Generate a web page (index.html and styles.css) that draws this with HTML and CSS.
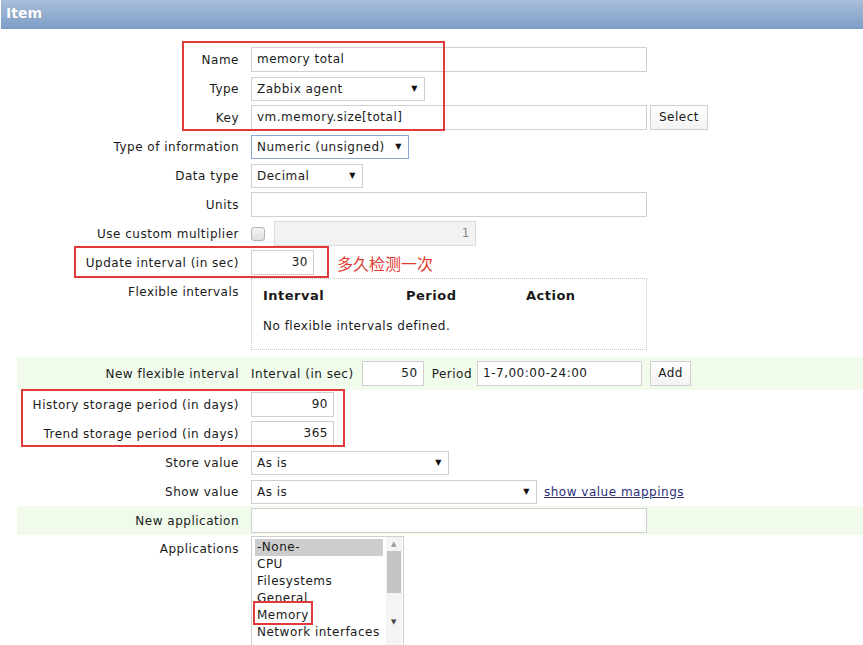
FILE: index.html
```html
<!DOCTYPE html>
<html>
<head>
<meta charset="utf-8">
<link rel="stylesheet" href="styles.css">
</head>
<body>
<div class="page">
  <div class="header">Item</div>
  <div class="form">
    <div class="row">
      <div class="label">Name</div>
      <div class="field">
        <div class="input w396">memory total</div>
      </div>
    </div>
    <div class="row">
      <div class="label">Type</div>
      <div class="field">
        <div class="select w174">Zabbix agent<span class="arrow">▼</span></div>
      </div>
    </div>
    <div class="row">
      <div class="label">Key</div>
      <div class="field">
        <div class="input w396">vm.memory.size[total]</div>
        <div class="button btn-select">Select</div>
      </div>
    </div>
    <div class="row">
      <div class="label">Type of information</div>
      <div class="field">
        <div class="select w158 focused">Numeric (unsigned)<span class="arrow">▼</span></div>
      </div>
    </div>
    <div class="row">
      <div class="label">Data type</div>
      <div class="field">
        <div class="select w112">Decimal<span class="arrow">▼</span></div>
      </div>
    </div>
    <div class="row">
      <div class="label">Units</div>
      <div class="field">
        <div class="input w396"></div>
      </div>
    </div>
    <div class="row">
      <div class="label">Use custom multiplier</div>
      <div class="field">
        <div class="checkbox"></div>
        <div class="input w202 disabled num">1</div>
      </div>
    </div>
    <div class="row">
      <div class="label">Update interval (in sec)</div>
      <div class="field">
        <div class="input w63 num">30</div>
        <span class="note">多久检测一次</span>
      </div>
    </div>
    <div class="row row-flex">
      <div class="label">Flexible intervals</div>
      <div class="field top">
        <div class="flexbox">
          <div class="flex-head">
            <span class="c1">Interval</span>
            <span class="c2">Period</span>
            <span class="c3">Action</span>
          </div>
          <div class="flex-empty">No flexible intervals defined.</div>
        </div>
      </div>
    </div>
    <div class="row green row-new">
      <div class="label">New flexible interval</div>
      <div class="field">
        <span class="inline-label first">Interval (in sec)</span>
        <div class="input w62 num">50</div>
        <span class="inline-label period">Period</span>
        <div class="input w165">1-7,00:00-24:00</div>
        <div class="button btn-add">Add</div>
      </div>
    </div>
    <div class="row">
      <div class="label">History storage period (in days)</div>
      <div class="field">
        <div class="input w83 num">90</div>
      </div>
    </div>
    <div class="row">
      <div class="label">Trend storage period (in days)</div>
      <div class="field">
        <div class="input w83 num">365</div>
      </div>
    </div>
    <div class="row">
      <div class="label">Store value</div>
      <div class="field">
        <div class="select w198">As is<span class="arrow">▼</span></div>
      </div>
    </div>
    <div class="row">
      <div class="label">Show value</div>
      <div class="field">
        <div class="select w286">As is<span class="arrow">▼</span></div>
        <a class="link" href="#">show value mappings</a>
      </div>
    </div>
    <div class="row green">
      <div class="label">New application</div>
      <div class="field">
        <div class="input w396"></div>
      </div>
    </div>
    <div class="row row-apps">
      <div class="label">Applications</div>
      <div class="field top">
        <div class="listbox">
          <div class="options">
            <div class="opt selected">-None-</div>
            <div class="opt">CPU</div>
            <div class="opt">Filesystems</div>
            <div class="opt">General</div>
            <div class="opt">Memory</div>
            <div class="opt">Network interfaces</div>
          </div>
          <div class="scrollbar">
            <span class="sarrow up">▲</span>
            <div class="thumb"></div>
            <span class="sarrow down">▼</span>
          </div>
        </div>
      </div>
    </div>
  </div>
  <div class="mark m1"></div>
  <div class="mark m2"></div>
  <div class="mark m3"></div>
  <div class="mark m4"></div>
</div>
</body>
</html>
```

FILE: styles.css
```css
html, body {
  margin: 0;
  padding: 0;
  background: #ffffff;
  overflow: hidden;
}
body {
  font-family: "DejaVu Sans", Verdana, sans-serif;
  font-size: 12px;
  letter-spacing: 0.5px;
  color: #1a1a1a;
}
.page {
  position: relative;
  width: 863px;
  height: 645px;
  overflow: hidden;
}
.header {
  height: 29px;
  line-height: 27px;
  padding-left: 5px;
  margin-left: 1px;
  background: linear-gradient(#a9bed8, #93aed0 50%, #7d9cc6);
  color: #ffffff;
  font-weight: bold;
  font-size: 14px;
  letter-spacing: 0;
  text-shadow: 0 0 1px #6d86a8;
  box-sizing: border-box;
}
.form {
  margin-left: 17px;
  padding-top: 16px;
}
.row {
  display: flex;
  align-items: center;
  height: 29px;
}
.row.green {
  background: #f0fbec;
}
.row-flex {
  height: 80px;
  align-items: flex-start;
}
.row-new {
  height: 33px;
}
.row-apps {
  align-items: flex-start;
  height: 120px;
}
.label {
  flex: none;
  width: 222px;
  padding-right: 12px;
  text-align: right;
  white-space: nowrap;
}
.row-flex .label {
  padding-top: 8px;
}
.row-apps .label {
  padding-top: 7px;
}
.field {
  display: flex;
  align-items: center;
}
.field.top {
  align-items: flex-start;
}
.input, .select, .button {
  box-sizing: border-box;
  height: 25px;
  border: 1px solid #cfcfcf;
  background: #fff;
  padding: 0 5px;
  line-height: 23px;
  white-space: nowrap;
  flex: none;
}
.select {
  height: 24px;
  line-height: 22px;
  display: flex;
  justify-content: space-between;
  padding-right: 6px;
}
.select.focused {
  border-color: #8ba6cf;
}
.arrow {
  font-size: 8px;
  color: #111;
}
.num { text-align: right; }
.disabled {
  background: #f2f2f2;
  border-color: #dcdcdc;
  color: #888;
}
.w396 { width: 396px; }
.w174 { width: 174px; }
.w158 { width: 158px; }
.w112 { width: 112px; }
.w202 { width: 202px; }
.w63 { width: 63px; }
.w62 { width: 62px; }
.w165 { width: 165px; }
.w83 { width: 83px; }
.w198 { width: 198px; }
.w286 { width: 286px; }
.button {
  background: linear-gradient(#ffffff, #f3f3f3);
  text-align: center;
  margin-left: 3px;
}
.btn-select { width: 58px; }
.btn-add { width: 41px; margin-left: 8px; }
.checkbox {
  box-sizing: border-box;
  width: 14px;
  height: 14px;
  border: 1px solid #b5b5b5;
  border-radius: 3px;
  background: linear-gradient(#f4f4f4, #dedede);
  margin-right: 9px;
}
.note {
  margin-left: 23px;
  color: #e0392f;
  font-family: "Noto Sans CJK SC", sans-serif;
  font-size: 16px;
  letter-spacing: 0;
}
.flexbox {
  box-sizing: border-box;
  width: 396px;
  height: 72px;
  margin-top: 1px;
  border: 1px dotted #c4c4c4;
  padding-left: 11px;
}
.flex-head {
  display: flex;
  font-weight: bold;
  font-size: 13px;
  margin-top: 9px;
  height: 18px;
}
.c1 { width: 143px; }
.c2 { width: 120px; }
.flex-empty {
  margin-top: 13px;
}
.inline-label {
  margin-right: 5px;
}
.inline-label.first {
  margin-right: 8px;
}
.inline-label.period {
  margin-left: 8px;
}
.link {
  margin-left: 7px;
  color: #2b2d7a;
  text-decoration: underline;
}
.listbox {
  box-sizing: border-box;
  width: 153px;
  height: 130px;
  margin-top: 1px;
  border: 1px solid #cfcfcf;
  display: flex;
  background: #fff;
}
.options {
  flex: 1;
  padding: 2px 0 0 3px;
  overflow: hidden;
}
.opt {
  height: 17px;
  line-height: 17px;
  padding-left: 2px;
  white-space: nowrap;
}
.opt.selected {
  background: #cdcdcd;
  margin-right: 3px;
}
.scrollbar {
  width: 16px;
  flex: none;
  margin-right: 1px;
  display: flex;
  flex-direction: column;
  align-items: center;
  background: #f4f4f4;
}
.sarrow {
  font-size: 7px;
  color: #999;
  height: 14px;
  line-height: 14px;
}
.sarrow.down {
  color: #444;
  margin-top: auto;
  margin-bottom: 36px;
}
.thumb {
  width: 14px;
  height: 42px;
  background: #c4c4c4;
}
.mark {
  position: absolute;
  border: 2px solid #e03a3a;
  box-sizing: border-box;
}
.m1 { left: 182px; top: 41px; width: 263px; height: 90px; }
.m2 { left: 74px; top: 246px; width: 255px; height: 32px; }
.m3 { left: 21px; top: 389px; width: 324px; height: 58px; }
.m4 { left: 253px; top: 601px; width: 60px; height: 24px; }
```
